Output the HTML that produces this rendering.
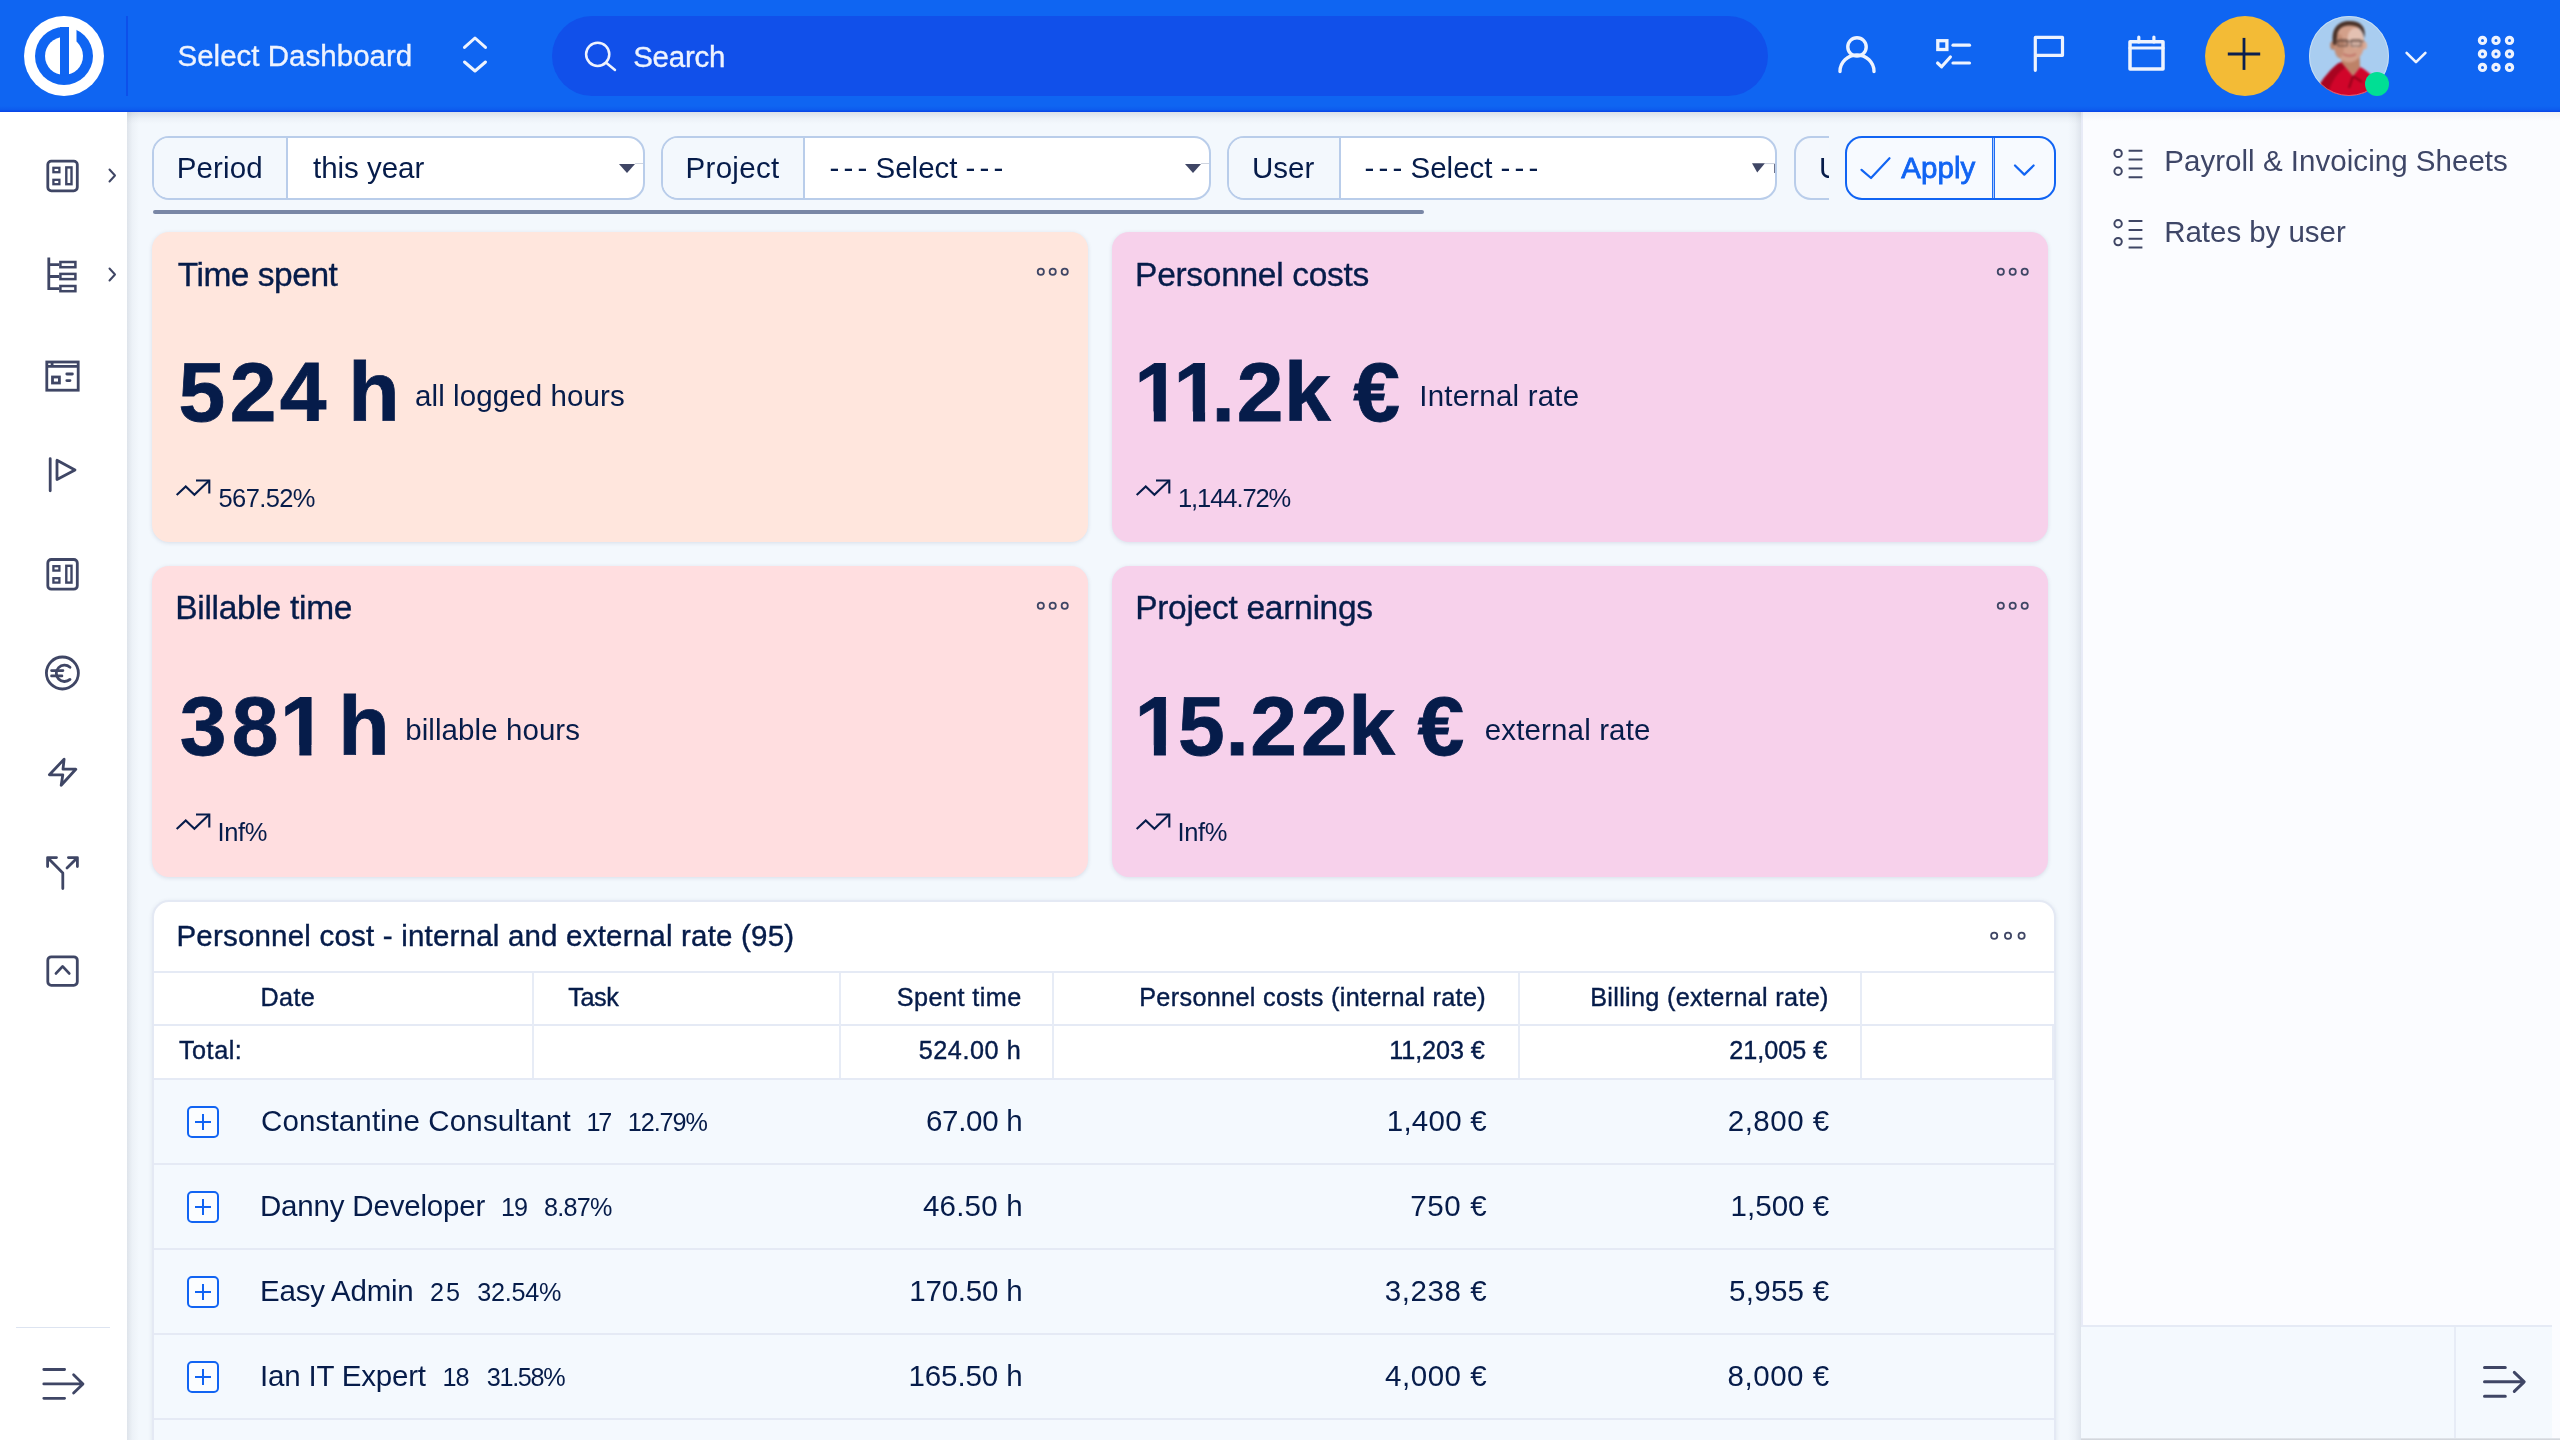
<!DOCTYPE html>
<html lang="en">
<head>
<meta charset="utf-8">
<title>Payroll &amp; Invoicing Sheets</title>
<style>
*{box-sizing:border-box;margin:0;padding:0}
html,body{width:2560px;height:1440px;overflow:hidden;background:#f3f8fd}
body{font-family:"Liberation Sans",sans-serif;color:#061c4a;position:relative}
#app{position:absolute;left:0;top:0;width:2560px;height:1440px;overflow:hidden;background:#f3f8fd}
.abs{position:absolute}
.t{position:absolute;white-space:pre;line-height:1;display:block;will-change:opacity}
svg{position:absolute;overflow:visible}
.ico{fill:none;stroke:#3f4665;stroke-linecap:round;stroke-linejoin:round}
.wico{fill:none;stroke:#eef3fe;stroke-linecap:round;stroke-linejoin:round}
/* top bar */
#topbar{position:absolute;left:0;top:0;width:2560px;height:112px;background:#0f65f2;z-index:30}
#topbar .sep{position:absolute;left:126px;top:16px;width:2px;height:80px;background:#0d50ea}
#search{position:absolute;left:552px;top:16px;width:1216px;height:80px;border-radius:40px;background:#1150ea}
#plus{position:absolute;left:2205px;top:16px;width:80px;height:80px;border-radius:50%;background:#f3bb36}
#avatar{position:absolute;left:2309px;top:16px;width:80px;height:80px;border-radius:50%;background:#aacdf0;overflow:hidden}
#online{position:absolute;left:2365px;top:72px;width:24px;height:24px;border-radius:50%;background:#00df94}
/* sidebar */
#sidebar{position:absolute;left:0;top:112px;width:127px;height:1328px;background:#fff;z-index:20}
#sideshadow{position:absolute;left:127px;top:112px;width:12px;height:1328px;background:linear-gradient(90deg,rgba(35,45,70,.10),rgba(35,45,70,.03) 45%,rgba(35,45,70,0));z-index:19}
#topshadow{position:absolute;left:127px;top:112px;width:1954px;height:12px;background:linear-gradient(180deg,rgba(40,50,80,.12),rgba(40,50,80,.03) 55%,rgba(40,50,80,0));z-index:19}
#sidebar .line{position:absolute;left:16px;top:1215px;width:94px;height:1px;background:#dde4f1}
/* filters */
.fgrp{position:absolute;top:136px;height:64px;border:2px solid #b9cdea;border-radius:17px;background:#fff;overflow:hidden}
.fgrp .lab{position:absolute;left:0;top:0;bottom:0;background:#f3f8fd;border-right:2px solid #b9cdea}
.tri{position:absolute;width:0;height:0;border-left:8px solid transparent;border-right:8px solid transparent;border-top:9px solid #3f4665}
#scroll{position:absolute;left:153px;top:210px;width:1271px;height:4px;border-radius:2px;background:#7987a6}
#apply{position:absolute;left:1845px;top:136px;width:211px;height:64px;border:2px solid #1164f3;border-radius:17px;background:#f7faff}
#apply .div{position:absolute;left:145px;top:0;width:3px;height:60px;background:linear-gradient(90deg,#1e6df4 0,#1e6df4 33.3%,#a9c6fb 33.3%,#a9c6fb 66.6%,#1e6df4 66.6%)}
/* cards */
.card{position:absolute;width:936px;height:310px;border-radius:17px;box-shadow:0 1px 4px rgba(30,50,90,.13)}
/* table */
#panel{position:absolute;left:152px;top:900px;width:1904px;height:560px;border:2px solid #e4e9f4;border-radius:17px;background:#fff;overflow:hidden;box-shadow:0 1px 4px rgba(30,50,90,.10)}
.hl{position:absolute;left:0;width:1900px;height:2px;background:#e5eaf5}
.vl{position:absolute;width:2px;background:#e7ecf6}
.rows{position:absolute;left:0;top:178px;width:1900px;height:400px;background:#f4f9fe}
.exp{position:absolute;width:32px;height:32px;border:2px solid #1164f3;border-radius:5px;background:#fbfdff}
.exp:before{content:"";position:absolute;left:6px;top:13px;width:16px;height:2px;background:#1164f3}
.exp:after{content:"";position:absolute;left:13px;top:6px;width:2px;height:16px;background:#1164f3}
/* right panel */
#rpanel{position:absolute;left:2081px;top:112px;width:479px;height:1328px;background:#fbfcff;z-index:18;box-shadow:inset 2px 0 0 #e8ebf7}
#rtop{position:absolute;left:0;top:0;width:479px;height:9px;background:linear-gradient(180deg,rgba(40,50,80,.06),rgba(40,50,80,0))}
#tbshade{position:absolute;left:0;top:106px;width:2560px;height:6px;background:linear-gradient(180deg,rgba(0,20,200,0),rgba(0,25,210,.12) 60%,rgba(0,30,220,.5))}
#rshadow{position:absolute;left:2068px;top:112px;width:13px;height:1328px;background:linear-gradient(270deg,rgba(40,55,90,.10),rgba(40,55,90,.035) 45%,rgba(40,55,90,0));z-index:17}
#rbottom{position:absolute;left:0;top:1213px;width:471px;height:113px;background:#f4f9fe;border-top:2px solid #e5eaf5}
#rbottom .v{position:absolute;left:373px;top:0;width:2px;height:113px;background:#e7ecf6}
#hscroll{position:absolute;left:2081px;top:1438px;width:479px;height:2px;background:linear-gradient(180deg,#e6e9ee,#cdd1d7);z-index:19}
</style>
</head>
<body>
<div id="app">
<header id="topbar">
  <div id="tbshade"></div>
  <svg width="80" height="80" style="left:24px;top:16px" viewBox="0 0 80 80">
    <circle cx="40" cy="40" r="40" fill="#fff"/>
    <circle cx="40" cy="40" r="29" fill="#0f65f2"/>
    <circle cx="40" cy="40" r="19" fill="#fff"/>
    <rect x="36" y="11" width="9" height="48.5" fill="#0f65f2"/>
    <rect x="45" y="10" width="7.5" height="16" fill="#fff"/>
  </svg>
  <div class="sep"></div>
  <span class="t" style="left:177.48px;top:39.10px;font-size:29.5px;line-height:33px;letter-spacing:0.017px;color:#eef3fe;-webkit-text-stroke:0.35px #eef3fe;">Select Dashboard</span>
  <svg class="wico" width="30" height="40" style="left:460px;top:36px" viewBox="460 36 30 40" stroke-width="3">
    <path d="M464.5 47.4 L475 38 L485.5 47.4"/><path d="M464.5 62 L475 71 L485.5 62"/>
  </svg>
  <div id="search">
    <svg class="wico" width="40" height="40" style="left:28px;top:22px" viewBox="580 38 40 40" stroke-width="2.5">
      <circle cx="597.7" cy="54.3" r="11.6"/><path d="M606.5 63 L615 70"/>
    </svg>
    <span class="t" style="left:81.17px;top:23.50px;font-size:29.5px;line-height:33px;letter-spacing:-0.223px;color:#eef3fe;-webkit-text-stroke:0.35px #eef3fe;">Search</span>
  </div>
  <svg class="wico" width="44" height="44" style="left:1835px;top:32px" viewBox="1835 32 44 44" stroke-width="3.4">
    <circle cx="1857" cy="46.9" r="9.2"/><path d="M1840 71.5 A17 16.5 0 0 1 1874 71.5"/>
  </svg>
  <svg class="wico" width="44" height="44" style="left:1930px;top:32px" viewBox="1930 32 44 44" stroke-width="3.2">
    <rect x="1937.8" y="40.7" width="9.1" height="8.8" stroke-width="3.3" stroke-linejoin="miter"/>
    <path d="M1953 45.2 L1969.5 45.2"/><path d="M1953 63 L1969.5 63"/>
    <path d="M1937.6 63 L1941.6 66.8 L1950.4 57"/>
  </svg>
  <svg class="wico" width="44" height="44" style="left:2026px;top:32px" viewBox="2026 32 44 44" stroke-width="3.2" stroke-linejoin="miter">
    <path d="M2035.3 70.3 L2035.3 37.4 L2062.5 37.4 L2062.5 55.3 L2035.3 55.3"/>
  </svg>
  <svg class="wico" width="44" height="44" style="left:2124px;top:30px" viewBox="2124 30 44 44" stroke-width="3.2" stroke-linejoin="miter">
    <rect x="2130" y="41.7" width="33" height="27.3" stroke-width="3.5"/>
    <path d="M2130 48 L2163 48" stroke-width="3.2"/>
    <path d="M2138.8 37 L2138.8 42"/><path d="M2153.9 37 L2153.9 42"/>
  </svg>
  <div id="plus">
    <svg width="80" height="80" style="left:0;top:0" viewBox="2205 16 80 80" fill="none" stroke="#0b1f4f" stroke-width="2.8" stroke-linecap="butt">
      <path d="M2227.8 54 L2260.2 54"/><path d="M2244 37.9 L2244 69.9"/>
    </svg>
  </div>
  <div id="avatar">
    <svg width="80" height="80" style="left:0;top:0;filter:blur(1.3px)" viewBox="0 0 80 80">
      <rect x="-5" y="-5" width="90" height="90" fill="#a9cdf0"/>
      <path d="M4 84 C8 68 20 55 29 47.5 L33 46 L44 60 L51 51 C58 54 66 62 76 74 L76 84 Z" fill="#d1052a"/>
      <path d="M4 84 C8 68 20 55 29 47.5 L33 46 L36 52 C26 58 20 70 18 84 Z" fill="#a80420"/>
      <path d="M33 38 L32.5 46.5 L44 60 L51 51 L50.5 38 Z" fill="#bd8268"/>
      <ellipse cx="23.8" cy="29.5" rx="2.6" ry="4.2" fill="#b9846c"/>
      <ellipse cx="55.6" cy="29.5" rx="2.4" ry="4" fill="#d9ad9a"/>
      <ellipse cx="40" cy="27" rx="15.3" ry="19.6" fill="#d3a08a"/>
      <ellipse cx="46.5" cy="22" rx="8" ry="10" fill="#edd3c8" opacity=".65"/>
      <ellipse cx="30" cy="30" rx="5" ry="12" fill="#b97f66" opacity=".55"/>
      <path d="M24 27 C21.5 11 31 4.5 41 5 C51 5 57.5 10.5 55.5 22 C53.5 12.5 48 9.3 41 9.6 C34 9.6 30 12 28.3 18 L27 29 L24.6 29 Z" fill="#4a3228"/>
      <path d="M26 25.3 L55 25.3" stroke="#4e3a34" stroke-width="1.5" fill="none" opacity=".6"/>
      <rect x="28.6" y="23.6" width="10" height="6.6" rx="2" fill="#6b4a3e" fill-opacity=".18" stroke="#4e3a34" stroke-width="1.3" stroke-opacity=".6"/>
      <rect x="42" y="23.6" width="10" height="6.6" rx="2" fill="#6b4a3e" fill-opacity=".12" stroke="#4e3a34" stroke-width="1.3" stroke-opacity=".6"/>
      <path d="M34 38 Q40.5 41.6 47 38" stroke="#bd6a62" stroke-width="1.8" fill="none" opacity=".85"/>
      <path d="M44 60 L40 72 M44 60 L53 66" stroke="#8f0319" stroke-width="2" fill="none"/>
    </svg>
    <div class="abs" style="left:0;top:0;width:80px;height:80px;border-radius:50%;border:1.5px solid rgba(255,255,255,.35)"></div>
  </div>
  <div id="online"></div>
  <svg class="wico" width="30" height="20" style="left:2401px;top:46px" viewBox="2401 46 30 20" stroke-width="2.6">
    <path d="M2406.6 52.8 L2416 62.2 L2425.4 52.8"/>
  </svg>
  <svg class="wico" width="40" height="40" style="left:2476px;top:34px" viewBox="2476 34 40 40" stroke-width="3.2">
    <circle cx="2482.5" cy="40.4" r="3.1"/><circle cx="2496" cy="40.4" r="3.1"/><circle cx="2509.5" cy="40.4" r="3.1"/>
    <circle cx="2482.5" cy="53.9" r="3.1"/><circle cx="2496" cy="53.9" r="3.1"/><circle cx="2509.5" cy="53.9" r="3.1"/>
    <circle cx="2482.5" cy="67.4" r="3.1"/><circle cx="2496" cy="67.4" r="3.1"/><circle cx="2509.5" cy="67.4" r="3.1"/>
  </svg>
</header>
<nav id="sidebar">
  <svg class="ico" width="127" height="1328" style="left:0;top:0" viewBox="0 112 127 1328" stroke-width="2.8">
    <!-- dashboard -->
    <g id="dash">
      <rect x="47.8" y="161.1" width="29.5" height="29.7" rx="3.5"/>
      <rect x="53.4" y="167.8" width="6" height="4.4" stroke-width="2.3" stroke-linejoin="miter"/>
      <rect x="53.4" y="179.8" width="6" height="4.4" stroke-width="2.3" stroke-linejoin="miter"/>
      <rect x="66.3" y="167.4" width="5.2" height="16.8" stroke-width="2.4" stroke-linejoin="miter"/>
    </g>
    <path d="M109.5 169.5 L115 175.5 L109.5 181.5" stroke-width="2"/>
    <!-- tree -->
    <path d="M48.8 257.6 L48.8 288.6 L59 288.6 M48.8 264.6 L59 264.6 M48.8 276.5 L59 276.5" stroke-linecap="butt" stroke-linejoin="miter"/>
    <rect x="60.4" y="262" width="15" height="5.2" stroke-width="2.5" stroke-linejoin="miter"/>
    <rect x="60.4" y="273.9" width="15" height="5.2" stroke-width="2.5" stroke-linejoin="miter"/>
    <rect x="60.4" y="286" width="15" height="5.2" stroke-width="2.5" stroke-linejoin="miter"/>
    <path d="M109.5 268.5 L115 274.5 L109.5 280.5" stroke-width="2"/>
    <!-- window -->
    <rect x="46.8" y="362" width="31.4" height="28.2" stroke-linejoin="miter"/>
    <path d="M46.8 366.3 L78.2 366.3 M52.1 362 L52.1 366.3" stroke-width="2.8" stroke-linecap="butt"/>
    <rect x="52.5" y="377" width="6.9" height="6" stroke-linejoin="miter"/>
    <path d="M66.8 374 L72.4 374 M66.8 380.6 L70 380.6"/>
    <!-- play flag -->
    <path d="M50.2 458.7 L50.2 490.8"/>
    <path d="M57 460.3 L57 479.5 L75 469.9 Z"/>
    <!-- dashboard 2 -->
    <use href="#dash" y="398.4"/>
    <!-- euro -->
    <circle cx="62.4" cy="673" r="16"/>
    <path d="M70 667.2 A8.2 8.2 0 1 0 70 679.4" stroke-width="2.8"/>
    <path d="M51.5 670.6 L63 670.6 M51.5 675.9 L62 675.9" stroke-width="2.6"/>
    <!-- bolt -->
    <path d="M64.1 759.2 L49.4 774.8 L62.8 774.8 L61.2 785.3 L75.8 769.2 L63 769.2 Z"/>
    <!-- fork -->
    <path d="M62.8 888.5 L62.8 873 L48.5 858.5 M47.6 866.5 L47.6 857.6 L56.5 857.6 M67 868 L76.8 858.2 M68.4 857.6 L77.4 857.6 L77.4 866.5"/>
    <!-- box up -->
    <rect x="47.8" y="956.8" width="29.5" height="28.5" rx="3.5"/>
    <path d="M56 973.4 L62.6 966.4 L69.2 973.4"/>
    <!-- collapse -->
    <path d="M43.8 1369.5 L64.6 1369.5 M43.8 1383.9 L82 1383.9 M43.8 1398.3 L64.6 1398.3 M73.6 1374.8 L83 1383.9 L73.6 1393"/>
  </svg>
  <div class="line"></div>
</nav>
<div id="sideshadow"></div>
<div id="topshadow"></div>
<main id="main">
  <!-- filters -->
  <div class="fgrp" style="left:152px;width:493px">
    <div class="lab" style="width:134px"></div>
    <span class="t" style="left:22.75px;top:13.00px;font-size:29.5px;line-height:33px;letter-spacing:0.127px;color:#061c4a;">Period</span>
    <span class="t" style="left:159.00px;top:13.00px;font-size:29.5px;line-height:33px;letter-spacing:-0.021px;color:#061c4a;">this year</span>
    <div class="tri" style="left:465px;top:26px"></div>
    <div class="abs" style="left:481px;top:25px;width:12px;height:1px;background:#cfd5e0"></div>
  </div>
  <div class="fgrp" style="left:661px;width:550px">
    <div class="lab" style="width:142px"></div>
    <span class="t" style="left:22.50px;top:13.00px;font-size:29.5px;line-height:33px;letter-spacing:0.314px;color:#061c4a;">Project</span>
    <span class="t" style="left:166.60px;top:13.00px;font-size:29.5px;line-height:33px;color:#061c4a;"><span style="letter-spacing:4.176px;margin-right:-8.37px">--- </span><span style="letter-spacing:-0.039px;margin-right:0.09px">Select </span><span style="letter-spacing:4.126px;margin-right:0.00px">---</span></span>
    <div class="tri" style="left:522px;top:26px"></div>
    <div class="abs" style="left:538px;top:25px;width:12px;height:1px;background:#cfd5e0"></div>
  </div>
  <div class="fgrp" style="left:1227px;width:550px">
    <div class="lab" style="width:112px"></div>
    <span class="t" style="left:23.00px;top:13.00px;font-size:29.5px;line-height:33px;letter-spacing:-0.020px;color:#061c4a;">User</span>
    <span class="t" style="left:135.60px;top:13.00px;font-size:29.5px;line-height:33px;color:#061c4a;"><span style="letter-spacing:4.176px;margin-right:-8.37px">--- </span><span style="letter-spacing:-0.039px;margin-right:0.09px">Select </span><span style="letter-spacing:4.126px;margin-right:0.00px">---</span></span>
    <svg width="30" height="14" style="left:520px;top:23px" viewBox="1749 161 30 14"><path d="M1752 163.2 L1765 163.2 L1757.2 172.4 Z" fill="#3f4665"/><path d="M1765 163.6 L1775 163.6" stroke="#c9cfdb" stroke-width="1"/><rect x="1774.2" y="164" width="2" height="9" fill="#4a5170"/></svg>
  </div>
  <div class="abs" style="left:1794px;top:136px;width:35px;height:64px;overflow:hidden">
    <div class="fgrp" style="left:0;top:0;width:300px;background:#f4f8fd">
      <span class="t" style="left:23.00px;top:13.00px;font-size:29.5px;line-height:33px;letter-spacing:-0.020px;color:#061c4a;">User</span>
    </div>
  </div>
  <div id="scroll"></div>
  <div id="apply">
    <svg width="40" height="30" style="left:10px;top:16px" viewBox="1857 154 40 30" fill="none" stroke="#1164f3" stroke-width="2.2" stroke-linecap="round" stroke-linejoin="round">
      <path d="M1861.5 169.8 L1871 178 L1889.5 158.2"/>
    </svg>
    <span class="t" style="left:54.30px;top:13.00px;font-size:29.5px;line-height:33px;letter-spacing:0.064px;color:#1164f3;-webkit-text-stroke:0.8px #1164f3;">Apply</span>
    <div class="div"></div>
    <svg width="30" height="20" style="left:163px;top:22px" viewBox="2010 160 30 20" fill="none" stroke="#1164f3" stroke-width="2.2" stroke-linecap="round" stroke-linejoin="round">
      <path d="M2015 165.5 L2024.3 174.6 L2033.6 165.5"/>
    </svg>
  </div>
  <!-- cards -->
  <section class="card" style="left:152px;top:232px;background:#ffe6dd">
    <span class="t" style="left:25.68px;top:23.50px;font-size:33.5px;line-height:37px;letter-spacing:-0.472px;color:#061c4a;-webkit-text-stroke:0.35px #061c4a;">Time spent</span>
    <span class="t" style="left:263.00px;top:146.80px;font-size:29.5px;line-height:33px;letter-spacing:0.098px;color:#061c4a;">all logged hours</span>
    <span class="t" style="left:66.50px;top:251.80px;font-size:25.5px;line-height:28px;letter-spacing:-0.616px;color:#061c4a;">567.52%</span>
    <span class="t" style="left:26.60px;top:112.60px;font-size:84px;line-height:94px;color:#061c4a;font-weight:700;-webkit-text-stroke:0.8px #061c4a;"><span style="letter-spacing:4.43px">5</span><span style="letter-spacing:3.28px">2</span><span style="letter-spacing:0.00px">4</span><span style="letter-spacing:-1.55px"> </span><span style="letter-spacing:0.00px">h</span></span>
    <svg class="ico" width="40" height="12" style="left:882px;top:34px" viewBox="882 34 40 12" stroke-width="1.8"><circle cx="888.8" cy="39.8" r="3.1"/><circle cx="900.7" cy="39.8" r="3.1"/><circle cx="912.7" cy="39.8" r="3.1"/></svg>
    <svg width="40" height="20" style="left:22px;top:245px" viewBox="22 245 40 20" fill="none" stroke="#061c4a" stroke-width="2.1" stroke-linejoin="miter"><path d="M24.7 263.1 L33.75 254.5 L42.4 262.7 L57.2 248.5"/><path d="M44 248.5 L57.3 248.5 L57.3 261.4"/></svg>
  </section>
  <section class="card" style="left:1112px;top:232px;background:#f7d1eb">
    <span class="t" style="left:23.08px;top:23.50px;font-size:33.5px;line-height:37px;letter-spacing:-0.292px;color:#061c4a;-webkit-text-stroke:0.35px #061c4a;">Personnel costs</span>
    <span class="t" style="left:307.25px;top:146.80px;font-size:29.5px;line-height:33px;letter-spacing:0.207px;color:#061c4a;">Internal rate</span>
    <span class="t" style="left:66.00px;top:251.80px;font-size:25.5px;line-height:28px;letter-spacing:-1.083px;color:#061c4a;">1,144.72%</span>
    <span class="t" style="left:22.33px;top:112.60px;font-size:84px;line-height:94px;color:#061c4a;font-weight:700;-webkit-text-stroke:0.8px #061c4a;"><span style="display:inline-block;clip-path:polygon(0 0,100% 0,100% 66.8px,31.5px 66.8px,31.5px 100%,19.5px 100%,19.5px 66.8px,0 66.8px);letter-spacing:-7.47px">1</span><span style="display:inline-block;clip-path:polygon(0 0,100% 0,100% 66.8px,31.5px 66.8px,31.5px 100%,19.5px 100%,19.5px 66.8px,0 66.8px);letter-spacing:-8.79px">1</span><span style="letter-spacing:1.84px">.</span><span style="letter-spacing:0.61px">2</span><span style="letter-spacing:0.00px">k</span><span style="letter-spacing:-0.93px"> </span><span style="letter-spacing:0.00px">€</span></span>
    <svg class="ico" width="40" height="12" style="left:882px;top:34px" viewBox="882 34 40 12" stroke-width="1.8"><circle cx="888.8" cy="39.8" r="3.1"/><circle cx="900.7" cy="39.8" r="3.1"/><circle cx="912.7" cy="39.8" r="3.1"/></svg>
    <svg width="40" height="20" style="left:22px;top:245px" viewBox="22 245 40 20" fill="none" stroke="#061c4a" stroke-width="2.1" stroke-linejoin="miter"><path d="M24.7 263.1 L33.75 254.5 L42.4 262.7 L57.2 248.5"/><path d="M44 248.5 L57.3 248.5 L57.3 261.4"/></svg>
  </section>
  <section class="card" style="left:152px;top:566px;height:311px;background:#ffdee0">
    <span class="t" style="left:23.18px;top:23.30px;font-size:33.5px;line-height:37px;letter-spacing:-0.277px;color:#061c4a;-webkit-text-stroke:0.35px #061c4a;">Billable time</span>
    <span class="t" style="left:253.25px;top:146.70px;font-size:29.5px;line-height:33px;letter-spacing:0.071px;color:#061c4a;">billable hours</span>
    <span class="t" style="left:65.50px;top:252.00px;font-size:25.5px;line-height:28px;letter-spacing:-0.367px;color:#061c4a;">Inf%</span>
    <span class="t" style="left:27.75px;top:112.50px;font-size:84px;line-height:94px;color:#061c4a;font-weight:700;-webkit-text-stroke:0.8px #061c4a;"><span style="letter-spacing:5.33px">3</span><span style="letter-spacing:1.38px">8</span><span style="display:inline-block;clip-path:polygon(0 0,100% 0,100% 66.8px,31.5px 66.8px,31.5px 100%,19.5px 100%,19.5px 66.8px,0 66.8px);letter-spacing:0.00px">1</span><span style="letter-spacing:-11.80px"> </span><span style="letter-spacing:0.00px">h</span></span>
    <svg class="ico" width="40" height="12" style="left:882px;top:34px" viewBox="882 34 40 12" stroke-width="1.8"><circle cx="888.8" cy="39.8" r="3.1"/><circle cx="900.7" cy="39.8" r="3.1"/><circle cx="912.7" cy="39.8" r="3.1"/></svg>
    <svg width="40" height="20" style="left:22px;top:245px" viewBox="22 245 40 20" fill="none" stroke="#061c4a" stroke-width="2.1" stroke-linejoin="miter"><path d="M24.7 263.1 L33.75 254.5 L42.4 262.7 L57.2 248.5"/><path d="M44 248.5 L57.3 248.5 L57.3 261.4"/></svg>
  </section>
  <section class="card" style="left:1112px;top:566px;height:311px;background:#f7d1eb">
    <span class="t" style="left:23.17px;top:23.30px;font-size:33.5px;line-height:37px;letter-spacing:-0.278px;color:#061c4a;-webkit-text-stroke:0.35px #061c4a;">Project earnings</span>
    <span class="t" style="left:372.75px;top:146.70px;font-size:29.5px;line-height:33px;letter-spacing:0.140px;color:#061c4a;">external rate</span>
    <span class="t" style="left:65.50px;top:252.00px;font-size:25.5px;line-height:28px;letter-spacing:-0.367px;color:#061c4a;">Inf%</span>
    <span class="t" style="left:22.40px;top:112.60px;font-size:84px;line-height:94px;color:#061c4a;font-weight:700;-webkit-text-stroke:0.8px #061c4a;"><span style="display:inline-block;clip-path:polygon(0 0,100% 0,100% 66.8px,31.5px 66.8px,31.5px 100%,19.5px 100%,19.5px 66.8px,0 66.8px);letter-spacing:-3.07px">1</span><span style="letter-spacing:0.66px">5</span><span style="letter-spacing:1.54px">.</span><span style="letter-spacing:4.03px">2</span><span style="letter-spacing:0.43px">2</span><span style="letter-spacing:0.00px">k</span><span style="letter-spacing:-0.93px"> </span><span style="letter-spacing:0.00px">€</span></span>
    <svg class="ico" width="40" height="12" style="left:882px;top:34px" viewBox="882 34 40 12" stroke-width="1.8"><circle cx="888.8" cy="39.8" r="3.1"/><circle cx="900.7" cy="39.8" r="3.1"/><circle cx="912.7" cy="39.8" r="3.1"/></svg>
    <svg width="40" height="20" style="left:22px;top:245px" viewBox="22 245 40 20" fill="none" stroke="#061c4a" stroke-width="2.1" stroke-linejoin="miter"><path d="M24.7 263.1 L33.75 254.5 L42.4 262.7 L57.2 248.5"/><path d="M44 248.5 L57.3 248.5 L57.3 261.4"/></svg>
  </section>
  <!-- table -->
  <section id="panel">
    <span class="t" style="left:22.45px;top:17.25px;font-size:29.5px;line-height:33px;letter-spacing:0.198px;color:#061c4a;-webkit-text-stroke:0.4px #061c4a;">Personnel cost - internal and external rate (95)</span>
    <svg class="ico" width="40" height="12" style="left:1834px;top:28px" viewBox="1988 930 40 12" stroke-width="1.8">
      <circle cx="1994.2" cy="935.7" r="3.1"/><circle cx="2008" cy="935.7" r="3.1"/><circle cx="2021.6" cy="935.7" r="3.1"/>
    </svg>
    <div class="hl" style="top:69px"></div>
    <div class="hl" style="top:122px"></div>
    <div class="hl" style="top:176px"></div>
    <div class="vl" style="left:378px;top:71px;height:105px"></div>
    <div class="vl" style="left:685px;top:71px;height:105px"></div>
    <div class="vl" style="left:898px;top:71px;height:105px"></div>
    <div class="vl" style="left:1364px;top:71px;height:105px"></div>
    <div class="vl" style="left:1706px;top:71px;height:105px"></div>
    <div class="vl" style="left:1898px;top:124px;height:52px"></div>
    <span class="t" style="left:106.45px;top:80.90px;font-size:25.2px;line-height:28px;letter-spacing:0.385px;color:#061c4a;-webkit-text-stroke:0.4px #061c4a;">Date</span>
    <span class="t" style="left:414.20px;top:80.90px;font-size:25.2px;line-height:28px;letter-spacing:-0.365px;color:#061c4a;-webkit-text-stroke:0.4px #061c4a;">Task</span>
    <span class="t" style="left:742.70px;top:80.90px;font-size:25.2px;line-height:28px;letter-spacing:0.467px;color:#061c4a;-webkit-text-stroke:0.4px #061c4a;">Spent time</span>
    <span class="t" style="left:985.20px;top:80.90px;font-size:25.2px;line-height:28px;letter-spacing:0.350px;color:#061c4a;-webkit-text-stroke:0.4px #061c4a;">Personnel costs (internal rate)</span>
    <span class="t" style="left:1436.20px;top:80.90px;font-size:25.2px;line-height:28px;letter-spacing:0.332px;color:#061c4a;-webkit-text-stroke:0.4px #061c4a;">Billing (external rate)</span>
    <span class="t" style="left:24.95px;top:134.10px;font-size:25.2px;line-height:28px;letter-spacing:0.530px;color:#061c4a;-webkit-text-stroke:0.4px #061c4a;">Total:</span>
    <span class="t" style="left:764.70px;top:134.10px;font-size:25.2px;line-height:28px;letter-spacing:0.581px;color:#061c4a;-webkit-text-stroke:0.4px #061c4a;">524.00 h</span>
    <span class="t" style="left:1235.20px;top:134.10px;font-size:25.2px;line-height:28px;letter-spacing:-0.081px;color:#061c4a;-webkit-text-stroke:0.4px #061c4a;">11,203 €</span>
    <span class="t" style="left:1575.20px;top:134.10px;font-size:25.2px;line-height:28px;letter-spacing:0.009px;color:#061c4a;-webkit-text-stroke:0.4px #061c4a;">21,005 €</span>
    <div class="rows">
      <div class="hl" style="top:83px"></div>
      <div class="hl" style="top:168px"></div>
      <div class="hl" style="top:253px"></div>
      <div class="hl" style="top:338px"></div>
      <div class="exp" style="left:33px;top:26px"></div>
      <div class="exp" style="left:33px;top:111px"></div>
      <div class="exp" style="left:33px;top:196px"></div>
      <div class="exp" style="left:33px;top:281px"></div>
      <span class="t" style="left:107.00px;top:23.60px;font-size:29.5px;line-height:33px;letter-spacing:0.144px;color:#061c4a;">Constantine Consultant</span>
    <span class="t" style="left:432.50px;top:28.00px;font-size:25.2px;line-height:28px;letter-spacing:-2.258px;color:#061c4a;">17</span>
    <span class="t" style="left:473.75px;top:28.00px;font-size:25.2px;line-height:28px;letter-spacing:-1.056px;color:#061c4a;">12.79%</span>
    <span class="t" style="left:772.00px;top:23.60px;font-size:29.5px;line-height:33px;letter-spacing:-0.295px;color:#061c4a;">67.00 h</span>
    <span class="t" style="left:1232.75px;top:23.60px;font-size:29.5px;line-height:33px;letter-spacing:0.247px;color:#061c4a;">1,400 €</span>
    <span class="t" style="left:1573.75px;top:23.60px;font-size:29.5px;line-height:33px;letter-spacing:0.497px;color:#061c4a;">2,800 €</span>
    <span class="t" style="left:106.00px;top:108.60px;font-size:29.5px;line-height:33px;letter-spacing:-0.186px;color:#061c4a;">Danny Developer</span>
    <span class="t" style="left:347.00px;top:113.00px;font-size:25.2px;line-height:28px;letter-spacing:-1.008px;color:#061c4a;">19</span>
    <span class="t" style="left:390.00px;top:113.00px;font-size:25.2px;line-height:28px;letter-spacing:-0.756px;color:#061c4a;">8.87%</span>
    <span class="t" style="left:769.00px;top:108.60px;font-size:29.5px;line-height:33px;letter-spacing:0.205px;color:#061c4a;">46.50 h</span>
    <span class="t" style="left:1256.25px;top:108.60px;font-size:29.5px;line-height:33px;letter-spacing:0.646px;color:#061c4a;">750 €</span>
    <span class="t" style="left:1576.50px;top:108.60px;font-size:29.5px;line-height:33px;letter-spacing:0.039px;color:#061c4a;">1,500 €</span>
    <span class="t" style="left:106.00px;top:193.60px;font-size:29.5px;line-height:33px;letter-spacing:-0.221px;color:#061c4a;">Easy Admin</span>
    <span class="t" style="left:276.10px;top:198.00px;font-size:25.2px;line-height:28px;letter-spacing:1.792px;color:#061c4a;">25</span>
    <span class="t" style="left:323.20px;top:198.00px;font-size:25.2px;line-height:28px;letter-spacing:-0.226px;color:#061c4a;">32.54%</span>
    <span class="t" style="left:755.25px;top:193.60px;font-size:29.5px;line-height:33px;letter-spacing:-0.204px;color:#061c4a;">170.50 h</span>
    <span class="t" style="left:1230.75px;top:193.60px;font-size:29.5px;line-height:33px;letter-spacing:0.580px;color:#061c4a;">3,238 €</span>
    <span class="t" style="left:1575.00px;top:193.60px;font-size:29.5px;line-height:33px;letter-spacing:0.289px;color:#061c4a;">5,955 €</span>
    <span class="t" style="left:106.00px;top:278.60px;font-size:29.5px;line-height:33px;letter-spacing:-0.190px;color:#061c4a;">Ian IT Expert</span>
    <span class="t" style="left:288.60px;top:283.00px;font-size:25.2px;line-height:28px;letter-spacing:-1.008px;color:#061c4a;">18</span>
    <span class="t" style="left:332.70px;top:283.00px;font-size:25.2px;line-height:28px;letter-spacing:-1.286px;color:#061c4a;">31.58%</span>
    <span class="t" style="left:754.50px;top:278.60px;font-size:29.5px;line-height:33px;letter-spacing:-0.096px;color:#061c4a;">165.50 h</span>
    <span class="t" style="left:1231.00px;top:278.60px;font-size:29.5px;line-height:33px;letter-spacing:0.539px;color:#061c4a;">4,000 €</span>
    <span class="t" style="left:1573.50px;top:278.60px;font-size:29.5px;line-height:33px;letter-spacing:0.539px;color:#061c4a;">8,000 €</span>
    </div>
  </section>
</main>
<aside id="rpanel">
  <div id="rtop"></div>
  <svg class="ico" width="40" height="110" style="left:30px;top:30px" viewBox="2111 142 40 110" stroke-width="2">
    <g id="lst"><circle cx="2118.1" cy="153.4" r="3.7"/><circle cx="2118.1" cy="171.2" r="3.7"/>
    <path d="M2128.6 150.7 L2142.4 150.7 M2128.6 159.5 L2142.4 159.5 M2128.6 168.4 L2142.4 168.4 M2128.6 177.2 L2142.4 177.2" stroke-linecap="butt"/></g>
    <use href="#lst" y="70.4"/>
  </svg>
  <span class="t" style="left:83.25px;top:32.00px;font-size:29.5px;line-height:33px;letter-spacing:0.036px;color:#3e4667;">Payroll &amp; Invoicing Sheets</span>
    <span class="t" style="left:83.25px;top:102.90px;font-size:29.5px;line-height:33px;letter-spacing:-0.044px;color:#3e4667;">Rates by user</span>
  <div id="rbottom"><div class="v"></div>
    <svg class="ico" width="50" height="40" style="left:398px;top:34px" viewBox="2479 1361 50 40" stroke-width="3">
      <path d="M2484.5 1367.4 L2505.3 1367.4 M2484.5 1381.8 L2523 1381.8 M2484.5 1396.3 L2505.3 1396.3 M2514.3 1372.4 L2524.2 1381.8 L2514.3 1391.4"/>
    </svg>
  </div>
</aside>
<div id="rshadow"></div>
<div id="hscroll"></div>
</div>
</body>
</html>
